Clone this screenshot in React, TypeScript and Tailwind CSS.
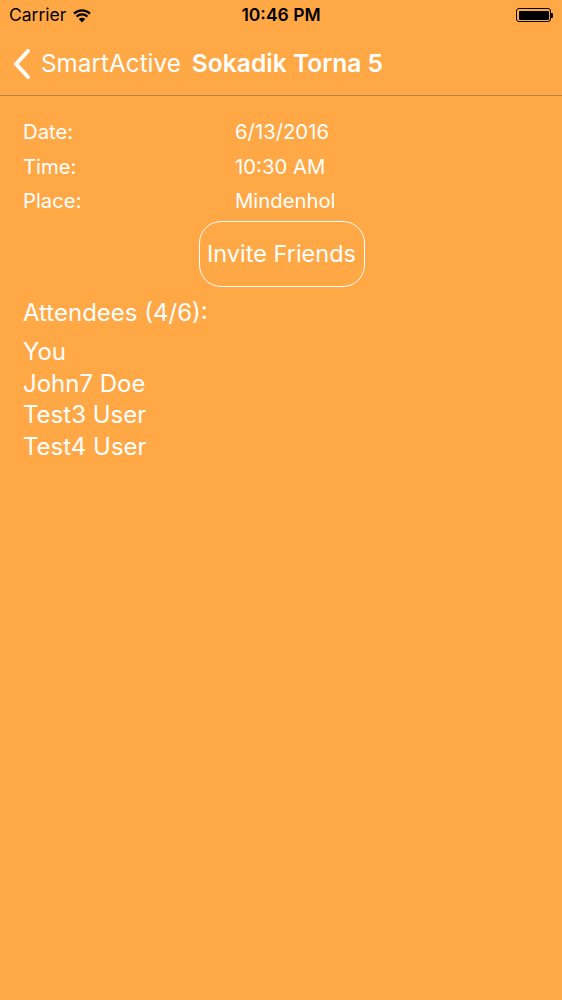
import React from "react";

export default function App() {
  const font = { fontFamily: 'Inter, "Liberation Sans", Arial, sans-serif' };
  return (
    <div className="w-[562px] h-[1000px] bg-[#ffa845] text-white overflow-hidden" style={font}>
      {/* Status bar */}
      <div className="h-[30px] flex items-center justify-between px-[9px] text-black relative">
        <div className="flex items-center gap-[6px] text-[17.5px] leading-none">
          <span>Carrier</span>
          <svg width="20" height="15" viewBox="0 0 20 15">
            <path d="M10 14.5 L6.8 11 A4.6 4.6 0 0 1 13.2 11 Z" fill="black" />
            <path d="M4.6 8.6 A7.8 7.8 0 0 1 15.4 8.6" stroke="black" strokeWidth="2.2" fill="none" />
            <path d="M2 5.6 A11.5 11.5 0 0 1 18 5.6" stroke="black" strokeWidth="2.2" fill="none" />
          </svg>
        </div>
        <div className="absolute left-0 right-0 text-center text-[17.5px] font-semibold leading-none pointer-events-none">10:46 PM</div>
        <div className="flex items-center">
          <div className="w-[35px] h-[14px] border border-black rounded-[3px] p-[1.5px]">
            <div className="w-full h-full bg-black rounded-[1px]" />
          </div>
          <div className="w-[2px] h-[5px] bg-black rounded-r-[1px]" />
        </div>
      </div>
      {/* Nav bar */}
      <div className="h-[66px] flex items-center border-b border-[#b88246] pt-[2px]">
        <svg width="20" height="30" viewBox="0 0 20 30" className="ml-[12px]">
          <path d="M16 2 L4 15 L16 28" stroke="white" strokeWidth="4" fill="none" strokeLinecap="round" strokeLinejoin="round" />
        </svg>
        <span className="ml-[9px] text-[24.3px] leading-none">SmartActive</span>
        <span className="ml-[11px] text-[24.6px] font-semibold leading-none">Sokadik Torna 5</span>
      </div>
      {/* Content */}
      <div className="px-[23px] pt-[24px]">
        <div className="flex flex-col gap-[11.5px] text-[20.3px] leading-[23px]">
          <div className="flex"><span className="w-[212px]">Date:</span><span>6/13/2016</span></div>
          <div className="flex"><span className="w-[212px]">Time:</span><span>10:30 AM</span></div>
          <div className="flex"><span className="w-[212px]">Place:</span><span>Mindenhol</span></div>
        </div>
        <div className="flex justify-center mt-[9px] pl-[1px]">
          <div className="w-[166px] h-[66px] border-[1.5px] border-white rounded-[22px] flex items-center justify-center text-[23.5px]">
            Invite Friends
          </div>
        </div>
        <div className="mt-[11px] text-[24px] leading-[30px]">Attendees (4/6):</div>
        <div className="mt-[8px] text-[24px] leading-[31.5px]">
          <div>You</div>
          <div>John7 Doe</div>
          <div>Test3 User</div>
          <div>Test4 User</div>
        </div>
      </div>
    </div>
  );
}
